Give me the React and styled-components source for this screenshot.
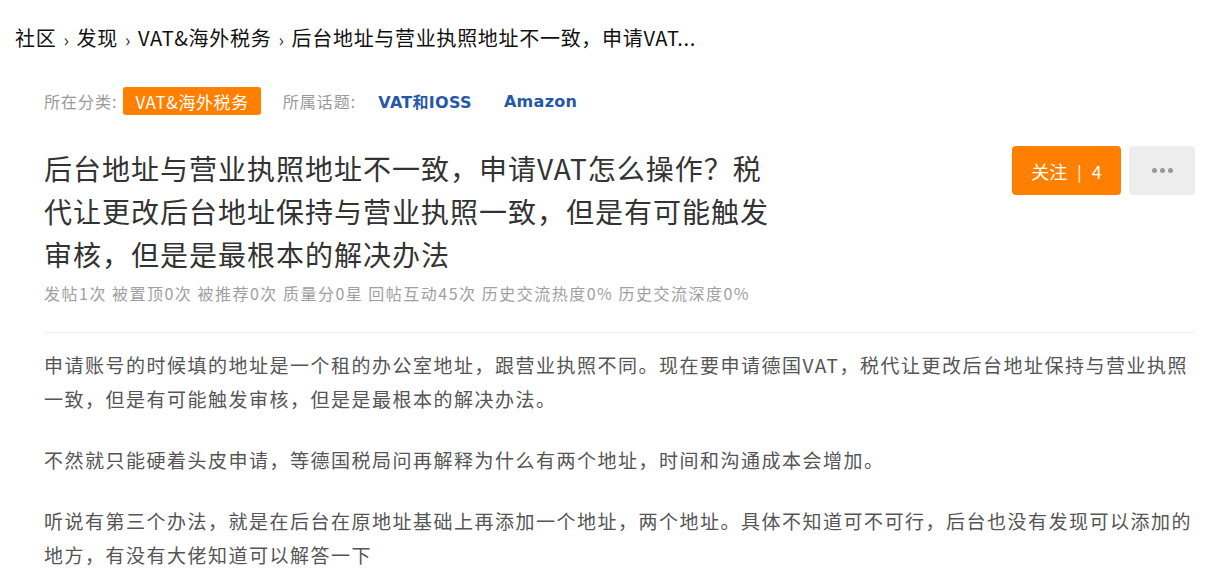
import React from 'react'
import styled, { createGlobalStyle } from 'styled-components'

const GlobalStyle = createGlobalStyle`
  body {
    margin: 0;
    background: #fff;
    font-family: "Noto Sans CJK SC", "Noto Sans", sans-serif;
  }
`

const crumbs = ['社区', '发现', 'VAT&海外税务', '后台地址与营业执照地址不一致，申请VAT...']

const stats = ['发帖1次', '被置顶0次', '被推荐0次', '质量分0星', '回帖互动45次', '历史交流热度0%', '历史交流深度0%']

const paragraphs = [
  '申请账号的时候填的地址是一个租的办公室地址，跟营业执照不同。现在要申请德国VAT，税代让更改后台地址保持与营业执照一致，但是有可能触发审核，但是是最根本的解决办法。',
  '不然就只能硬着头皮申请，等德国税局问再解释为什么有两个地址，时间和沟通成本会增加。',
  '听说有第三个办法，就是在后台在原地址基础上再添加一个地址，两个地址。具体不知道可不可行，后台也没有发现可以添加的地方，有没有大佬知道可以解答一下',
]

const App = () => {
  return (
    <>
      <GlobalStyle />
      <Breadcrumb>
        {crumbs.map((c, i) => (
          <React.Fragment key={c}>
            {i > 0 && <Sep>›</Sep>}
            <span>{c}</span>
          </React.Fragment>
        ))}
      </Breadcrumb>
      <Main>
        <MetaRow>
          <Label>所在分类:</Label>
          <Tag>VAT&amp;海外税务</Tag>
          <Label $gap>所属话题:</Label>
          <Topic>VAT和IOSS</Topic>
          <Topic>Amazon</Topic>
        </MetaRow>
        <Header>
          <div>
            <Title>后台地址与营业执照地址不一致，申请VAT怎么操作？税代让更改后台地址保持与营业执照一致，但是有可能触发审核，但是是最根本的解决办法</Title>
            <Stats>{stats.join(' ')}</Stats>
          </div>
          <Actions>
            <FollowButton>关注<Bar>|</Bar>4</FollowButton>
            <MoreButton>
              <Dot /><Dot /><Dot />
            </MoreButton>
          </Actions>
        </Header>
        <Divider />
        <Body>
          {paragraphs.map((p) => (
            <p key={p}>{p}</p>
          ))}
        </Body>
      </Main>
    </>
  )
}

const Breadcrumb = styled.nav`
  display: flex;
  align-items: center;
  padding: 25px 15px 0;
  font-size: 20px;
  line-height: 26px;
  letter-spacing: 0.7px;
  color: #111;
`

const Sep = styled.span`
  margin: 0 7px;
  font-size: 18px;
  color: #333;
  position: relative;
  top: 1px;
`

const Main = styled.main`
  padding: 0 10px 0 44px;
`

const MetaRow = styled.div`
  display: flex;
  align-items: center;
  margin-top: 36px;
  height: 28px;
`

const Label = styled.span`
  font-size: 16px;
  letter-spacing: 1px;
  color: #999;
  margin-left: ${(p) => (p.$gap ? '22px' : '0')};
`

const Tag = styled.span`
  margin-left: 6px;
  height: 28px;
  padding: 0 12px;
  display: flex;
  align-items: center;
  border-radius: 3px;
  background: #ff7f00;
  color: #fff;
  font-size: 17px;
  letter-spacing: 0.6px;
`

const Topic = styled.span`
  margin-left: 22px;
  font-family: "DejaVu Sans", "Noto Sans CJK SC", sans-serif;
  font-weight: 700;
  font-size: 16px;
  letter-spacing: 0.3px;
  color: #2559a6;

  & + & {
    margin-left: 32px;
  }
`

const Header = styled.div`
  display: flex;
  justify-content: space-between;
  align-items: flex-start;
  margin-top: 32px;
`

const Title = styled.h1`
  margin: 0;
  max-width: 740px;
  font-size: 28px;
  font-weight: 400;
  letter-spacing: 1px;
  line-height: 43px;
  color: #333;
`

const Stats = styled.div`
  margin-top: 6px;
  font-size: 16px;
  line-height: 22px;
  letter-spacing: 1.5px;
  color: #a0a0a0;
`

const Actions = styled.div`
  display: flex;
  gap: 8px;
  margin-top: -1px;
`

const FollowButton = styled.button`
  width: 109px;
  height: 49px;
  border: none;
  border-radius: 4px;
  background: #ff7f00;
  color: #fff;
  font-family: inherit;
  font-size: 18px;
  display: flex;
  align-items: center;
  justify-content: center;
`

const Bar = styled.span`
  margin: 0 10px;
  font-size: 16px;
`

const MoreButton = styled.button`
  width: 66px;
  height: 49px;
  border: none;
  border-radius: 4px;
  background: #ededed;
  display: flex;
  align-items: center;
  justify-content: center;
  gap: 3px;
`

const Dot = styled.span`
  width: 5px;
  height: 5px;
  border-radius: 50%;
  background: #999;
`

const Divider = styled.hr`
  margin: 28px 0 0;
  border: none;
  border-top: 1px solid #f0f0f0;
`

const Body = styled.div`
  padding-top: 15px;
  font-size: 19px;
  line-height: 34px;
  letter-spacing: 1.5px;
  color: #555;

  p {
    margin: 0 0 27px;
  }
`

export default App
